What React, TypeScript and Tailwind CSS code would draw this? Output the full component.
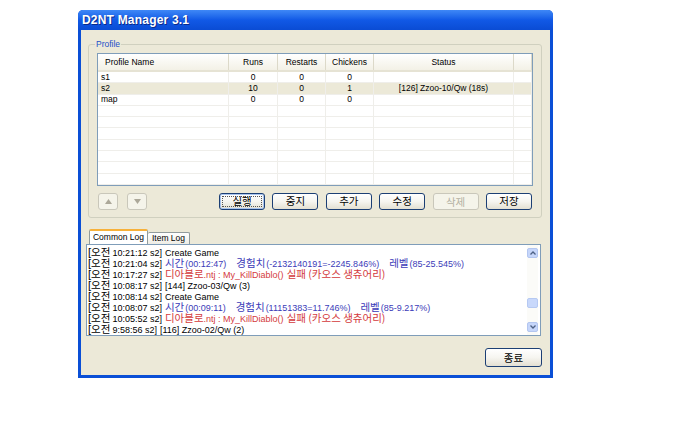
import React from "react";

const FONT = '"Liberation Sans", "Noto Sans CJK KR", sans-serif';
const KFONT = '"Noto Sans CJK KR", "Liberation Sans", sans-serif';

const cols = [131, 49, 48, 48, 140];

const rows: string[][] = [
  ["s1", "0", "0", "0", ""],
  ["s2", "10", "0", "1", "[126] Zzoo-10/Qw (18s)"],
  ["map", "0", "0", "0", ""],
  ["", "", "", "", ""],
  ["", "", "", "", ""],
  ["", "", "", "", ""],
  ["", "", "", "", ""],
  ["", "", "", "", ""],
  ["", "", "", "", ""],
  ["", "", "", "", ""],
];

function Btn({ label, focused, disabled }: { label: string; focused?: boolean; disabled?: boolean }) {
  if (disabled) {
    return (
      <div className="h-[17px] w-[46px] rounded-[3px] border border-[#c9c7ba] bg-[#f5f4ea] flex items-center justify-center text-[10.5px] text-[#b4b1a2]" style={{ fontFamily: KFONT }}>
        {label}
      </div>
    );
  }
  return (
    <div className={"h-[17px] w-[46px] rounded-[3px] border border-[#1c3f74] bg-gradient-to-b from-white via-[#f6f5f0] to-[#e3e0d2] flex items-center justify-center text-[10.5px] text-black " + (focused ? "shadow-[inset_0_0_0_1px_#a8c4ee]" : "")} style={{ fontFamily: KFONT }}>
      {focused ? (
        <div className="w-[40px] h-[11px] border border-dotted border-[#555] flex items-center justify-center leading-none">{label}</div>
      ) : (
        <span className="leading-none">{label}</span>
      )}
    </div>
  );
}

function ArrowBtn({ up }: { up?: boolean }) {
  return (
    <div className="h-[17px] w-[20px] rounded-[3px] border border-[#c9c7ba] bg-[#f5f4ea] flex items-center justify-center">
      <svg width="7" height="5" viewBox="0 0 7 5">
        {up ? <polygon points="3.5,0 7,5 0,5" fill="#aca899" /> : <polygon points="0,0 7,0 3.5,5" fill="#aca899" />}
      </svg>
    </div>
  );
}

const K = ({ children, c, cls = "" }: { children: React.ReactNode; c?: string; cls?: string }) => (
  <span className={"text-[10.5px] leading-[11px] whitespace-pre " + cls} style={{ fontFamily: KFONT, color: c }}>{children}</span>
);
const L = ({ children, c, cls = "" }: { children: React.ReactNode; c?: string; cls?: string }) => (
  <span className={"text-[9px] leading-[11px] whitespace-pre " + cls} style={{ color: c }}>{children}</span>
);

const BLUE = "#3b3bb8";
const RED = "#d43a3c";

function Line({ t, children }: { t: string; children: React.ReactNode }) {
  return (
    <div className="h-[11px] flex items-baseline">
      <span className="text-[11px] leading-[11px] font-light">[</span>
      <K>오전</K>
      <L cls="ml-[2px]">{t} s2]</L>
      <div className="ml-[3px] flex items-baseline">{children}</div>
    </div>
  );
}

function ExpLine({ t, time, exp, lvl }: { t: string; time: string; exp: string; lvl: string }) {
  return (
    <Line t={t}>
      <K c={BLUE}>시간</K>
      <L c={BLUE} cls="ml-[1px]">{time}</L>
      <K c={BLUE} cls="ml-[10px]">경험치</K>
      <L c={BLUE} cls="ml-[1px]">{exp}</L>
      <K c={BLUE} cls="ml-[10px]">레벨</K>
      <L c={BLUE} cls="ml-[1px]">{lvl}</L>
    </Line>
  );
}

function FailLine({ t }: { t: string }) {
  return (
    <Line t={t}>
      <K c={RED}>디아블로</K>
      <L c={RED}>.ntj : My_KillDiablo()</L>
      <K c={RED} cls="ml-[3px]">실패 (카오스 생츄어리)</K>
    </Line>
  );
}

function TextLine({ t, text }: { t: string; text: string }) {
  return (
    <Line t={t}>
      <L>{text}</L>
    </Line>
  );
}

export default function App() {
  return (
    <div className="w-[680px] h-[425px] bg-white overflow-hidden" style={{ fontFamily: FONT }}>
      <div className="pl-[78px] pt-[10px]">
        <div className="w-[475px] h-[368px] rounded-t-[5px] bg-[#0a4fd6] flex flex-col">
          {/* title bar */}
          <div className="h-[20px] rounded-t-[5px] bg-gradient-to-b from-[#3f88f6] via-[#1159e6] to-[#0a4cd4] flex items-center pl-[4px]">
            <span className="text-white font-bold text-[12px] tracking-[0.2px] [text-shadow:1px_1px_0_#0a2a8a]">D2NT Manager 3.1</span>
          </div>
          {/* body */}
          <div className="mx-[3px] mb-[3px] flex-1 bg-[#ece9d8] flex flex-col">
            <fieldset className="mt-[9px] ml-[7px] w-[454px] border border-[#d0d0bf] rounded-[3px] px-[8px] pt-[4px] pb-[7px]">
              <legend className="ml-[-2px] px-[1px] text-[8.5px] leading-[10px] text-[#1d4fc8]">Profile</legend>
              {/* list view */}
              <div className="w-[436px] h-[133px] border border-[#7f9db9] bg-white overflow-hidden text-[8.5px] text-black">
                <div className="flex h-[18px] bg-gradient-to-b from-white to-[#f3f1e6] border-b-[2px] border-[#e6e3d4]">
                  {["Profile Name", "Runs", "Restarts", "Chickens", "Status"].map((h, i) => (
                    <div
                      key={h}
                      className={"h-full flex items-center border-r border-[#dcd9c9] " + (i === 0 ? "pl-[7px]" : "justify-center")}
                      style={{ width: cols[i] }}
                    >
                      {h}
                    </div>
                  ))}
                  <div className="flex-1 border-r border-[#dcd9c9]" />
                </div>
                {rows.map((r, ri) => (
                  <div key={ri} className={"flex h-[11.3px] " + (ri === 1 ? "bg-[#ece9d8]" : "")}>
                    {r.map((c, ci) => (
                      <div
                        key={ci}
                        className={"h-full flex items-center border-r border-b border-[#efeeea] leading-none " + (ci === 0 ? "pl-[3px]" : "justify-center")}
                        style={{ width: cols[ci] }}
                      >
                        {c}
                      </div>
                    ))}
                    <div className="flex-1 border-b border-r border-[#efeeea]" />
                  </div>
                ))}
              </div>
              {/* buttons */}
              <div className="mt-[7px] flex items-center">
                <div className="ml-[1px] flex gap-[9px]">
                  <ArrowBtn up />
                  <ArrowBtn />
                </div>
                <div className="ml-auto mr-[1px] flex gap-[7.4px]">
                  <Btn label="실행" focused />
                  <Btn label="중지" />
                  <Btn label="추가" />
                  <Btn label="수정" />
                  <Btn label="삭제" disabled />
                  <Btn label="저장" />
                </div>
              </div>
            </fieldset>

            {/* tabs */}
            <div className="mt-[11px] ml-[8px] h-[15px] flex items-end text-[8.5px]">
              <div className="h-[15px] w-[59px] bg-white border border-b-0 border-[#919b9c] border-t-[2px] border-t-[#f7b13a] rounded-t-[2px] flex items-center justify-center">
                Common Log
              </div>
              <div className="h-[12px] w-[42px] bg-gradient-to-b from-white to-[#eeede5] border border-l-0 border-b-0 border-[#919b9c] rounded-t-[2px] flex items-center justify-center">
                Item Log
              </div>
            </div>

            {/* log box */}
            <div className="ml-[5px] w-[455px] h-[92px] border border-[#7f9db9] bg-white flex">
              <div className="flex-1 pl-[1px] pt-[1px] overflow-hidden text-black">
                <TextLine t="10:21:12" text="Create Game" />
                <ExpLine t="10:21:04" time="(00:12:47)" exp="(-2132140191=-2245.846%)" lvl="(85-25.545%)" />
                <FailLine t="10:17:27" />
                <TextLine t="10:08:17" text="[144] Zzoo-03/Qw (3)" />
                <TextLine t="10:08:14" text="Create Game" />
                <ExpLine t="10:08:07" time="(00:09:11)" exp="(11151383=11.746%)" lvl="(85-9.217%)" />
                <FailLine t="10:05:52" />
                <TextLine t="9:58:56" text="[116] Zzoo-02/Qw (2)" />
              </div>
              {/* scrollbar */}
              <div className="w-[11px] mr-[2px] bg-[#fbfbf8] flex flex-col py-[3px]">
                <div className="h-[10px] rounded-[2px] bg-[#c6d6fa] border border-[#b3c6f0] flex items-center justify-center">
                  <svg width="6" height="4" viewBox="0 0 6 4"><polyline points="0.5,3.5 3,1 5.5,3.5" fill="none" stroke="#4d6185" strokeWidth="1.3" /></svg>
                </div>
                <div className="mt-[40px] h-[10px] rounded-[2px] bg-[#c8d8fb] border border-[#b6c9f2]" />
                <div className="mt-auto h-[10px] rounded-[2px] bg-[#c6d6fa] border border-[#b3c6f0] flex items-center justify-center">
                  <svg width="6" height="4" viewBox="0 0 6 4"><polyline points="0.5,0.5 3,3 5.5,0.5" fill="none" stroke="#4d6185" strokeWidth="1.3" /></svg>
                </div>
              </div>
            </div>

            {/* close */}
            <div className="mt-[12px] mr-[8px] self-end h-[19px] w-[57px] rounded-[3px] border border-[#1c3f74] bg-gradient-to-b from-white via-[#f6f5f0] to-[#e3e0d2] flex items-center justify-center text-[10.5px]" style={{ fontFamily: KFONT }}>
              종료
            </div>
          </div>
        </div>
      </div>
    </div>
  );
}
